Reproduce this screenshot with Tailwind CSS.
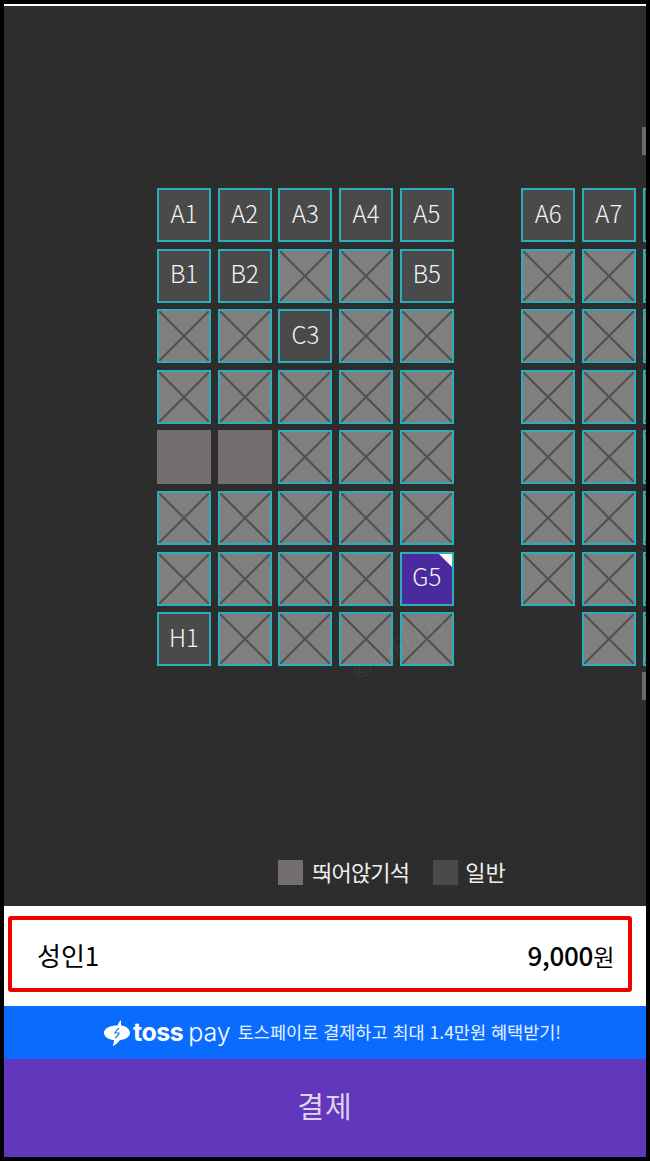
<!DOCTYPE html>
<html lang="ko">
<head>
    <meta charset="UTF-8">
    <meta name="viewport" content="width=device-width, initial-scale=1.0">
    <script src="https://cdn.jsdelivr.net/npm/@tailwindcss/browser@4"></script>
    <title>좌석 선택</title>
</head>
<body class="bg-black font-['Noto_Sans_CJK_KR','Noto_Sans',sans-serif]">
    <main class="w-[650px] h-[1161px] px-1 pt-1 pb-1 flex flex-col">
        <div class="h-[2px] bg-white shrink-0"></div>

        <!-- seat map -->
        <section class="relative h-[900px] shrink-0 overflow-hidden bg-[#2d2d2d] pt-[182px] pl-[153px]">
            <div id="seats" class="grid grid-cols-[repeat(10,54px)] auto-rows-[54px] gap-x-[6.7px] gap-y-[6.62px]"></div>

            <div class="absolute right-0 top-[121px] w-1 h-7 bg-[#6b6b6b]"></div>
            <div class="absolute right-0 top-[666px] w-1 h-7 bg-[#6b6b6b]"></div>
            <span class="absolute left-[342px] top-[622px] -rotate-[30deg] text-[24px] font-light text-white/5">© LIFEEO</span>

            <div class="absolute left-[274px] top-[853px] flex items-center text-[22px] leading-[25px] text-[#f0f0f0]">
                <span class="w-[25px] h-[25px] bg-[#756e6e]"></span>
                <span class="relative ml-[9px] pb-[2px] tracking-[-0.8px]">띄어앉기석<span class="absolute left-[6px] top-[3px] text-[15px]">ㅈ</span></span>
                <span class="w-[25px] h-[25px] ml-6 bg-[#4a4a4a]"></span>
                <span class="ml-[7px] pb-[2px]">일반</span>
            </div>
        </section>

        <!-- price -->
        <section class="h-[100px] shrink-0 bg-white pt-2.5 pl-1 pr-3.5">
            <div class="h-[76px] flex items-center justify-between rounded-[3px] border-4 border-[#ee0000] pl-[25px] pr-[14px] text-black">
                <span class="text-[26px]">성인1</span>
                <span class="text-[23px] tracking-[-0.3px]"><b class="text-[26px] font-medium">9,000</b>원</span>
            </div>
        </section>

        <!-- toss banner -->
        <section class="h-[53px] shrink-0 bg-[#0a6cff] flex items-center justify-center pl-3.5 text-white">
            <svg class="w-[28px] h-[28px] mr-[2px]" viewBox="0 0 28 28" fill="#fff">
                <path d="M18 1 C16.5 2.5 15 4.5 14.5 6.5 C7 6.5 1 9 1 14 C1 17.5 5 20.5 11 21 C11 23 10.5 25.5 9.5 27 C12.5 26 15.5 23.5 17 21 C23 20.5 27 17.5 27 14 C27 10 23 7 18 6.5 C18 4.5 18 2.5 18 1 Z"/>
                <path d="M16 9 C14.5 11 12 12 12 14 L16 14 C16 16 14 17.5 12 19" fill="none" stroke="#0a6cff" stroke-width="1.2"/>
            </svg>
            <span class="text-[25px] font-bold font-['Inter'] tracking-[-0.5px] leading-none">toss</span>
            <span class="ml-[5px] text-[25px] font-light font-['Inter'] leading-none">pay</span>
            <span class="ml-[7px] text-[17.5px] text-white/90">토스페이로 결제하고 최대 1.4만원 혜택받기!</span>
        </section>

        <!-- pay button -->
        <section class="flex-1 bg-[#6137bb] flex items-center justify-center pb-1 text-[29px] tracking-[1px] text-[#ddd3ee]">결제</section>
    </main>

    <script>
      // s = spaced-out seat, 0 = taken, - = no seat
      var map = [
        ['A1','A2','A3','A4','A5','-','A6','A7','A8'],
        ['B1','B2',0,0,'B5','-',0,0,0],
        [0,0,'C3',0,0,'-',0,0,0],
        [0,0,0,0,0,'-',0,0,0],
        ['s','s',0,0,0,'-',0,0,0],
        [0,0,0,0,0,'-',0,0,0],
        [0,0,0,0,'G5','-',0,0,0],
        ['H1',0,0,0,0,'-','-',0,0]
      ];
      var base = 'relative flex items-center justify-center w-[54px] h-[54px] pb-[5px] text-[24px] font-light text-[#f4f4f4] ';
      var cross = '<svg class="absolute inset-0 w-full h-full" viewBox="0 0 50 50"><path d="M0 0L50 50M50 0L0 50" stroke="#505050" stroke-width="2"/></svg>';
      var html = '';
      map.forEach(function (row) {
        row.forEach(function (s) {
          if (s === '-') {
            html += '<div></div>';
          } else if (s === 's') {
            html += '<div class="' + base + 'bg-[#756e6e]"></div>';
          } else if (s === 0) {
            html += '<div class="' + base + 'border-2 border-[#2aaebb] bg-[#7f7f7f]">' + cross + '</div>';
          } else if (s === 'G5') {
            html += '<div class="' + base + 'border-2 border-[#2aaebb] bg-[#4a2a9c]">G5<span class="absolute top-0 right-0 border-t-[13px] border-l-[13px] border-t-white border-l-transparent"></span></div>';
          } else {
            html += '<div class="' + base + 'border-2 border-[#2aaebb] bg-[#4a4a4a]">' + s + '</div>';
          }
        });
        html += '<div></div>';
      });
      document.getElementById('seats').innerHTML = html;
    </script>
</body>
</html>
